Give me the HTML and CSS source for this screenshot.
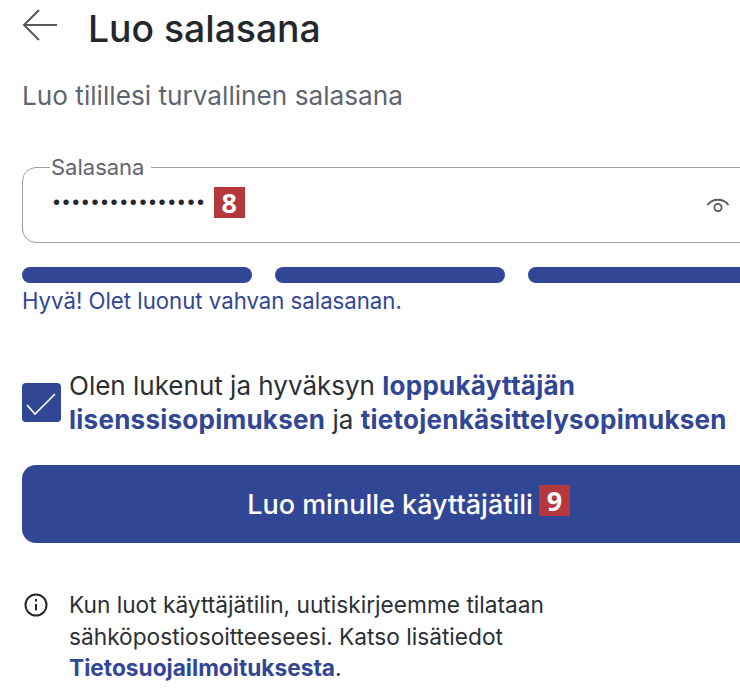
FILE: index.html
```html
<!DOCTYPE html>
<html lang="fi">
<head>
    <meta charset="UTF-8">
    <title>Luo salasana</title>
    <link rel="stylesheet" href="styles.css">
</head>
<body>
    <div class="page">
        <header class="header">
            <svg class="back-icon" width="36" height="34" viewBox="0 0 36 34" fill="none" stroke="#55585f" stroke-width="2">
                <path d="M35 17H2"></path>
                <path d="M17 2L2 17l15 15"></path>
            </svg>
            <h1 class="title">Luo salasana</h1>
        </header>

        <p class="intro">Luo tilillesi turvallinen salasana</p>

        <fieldset class="field">
            <legend class="field-label">Salasana</legend>
            <div class="field-row">
                <span class="dots">••••••••••••••••</span>
                <span class="badge">8</span>
                <svg class="eye-icon" width="26" height="18" viewBox="0 0 26 18" fill="none" stroke="#55585f" stroke-width="1.8">
                    <path d="M2.5 9C7.500 2 18.500 2 23.500 9"></path>
                    <circle cx="13" cy="11.500" r="3.600"></circle>
                </svg>
            </div>
        </fieldset>

        <div class="strength">
            <span class="strength-bar"></span>
            <span class="strength-bar"></span>
            <span class="strength-bar"></span>
        </div>
        <p class="strength-text">Hyvä! Olet luonut vahvan salasanan.</p>

        <div class="terms">
            <span class="checkbox">
                <svg width="39" height="39" viewBox="0 0 39 39" fill="none" stroke="#fff" stroke-width="1.6">
                    <path d="M5 22l8 9L33 11"></path>
                </svg>
            </span>
            <p class="terms-text">Olen lukenut ja hyväksyn <a class="link link-wide" href="#">loppukäyttäjän lisenssisopimuksen</a> ja <a class="link link-wide" href="#">tietojenkäsittelysopimuksen</a></p>
        </div>

        <button class="btn">
            <span class="btn-label">Luo minulle käyttäjätili<span class="badge badge-over">9</span></span>
        </button>

        <div class="notice">
            <svg class="info-icon" width="24" height="24" viewBox="0 0 24 24" fill="none" stroke="#26282c" stroke-width="2">
                <circle cx="12" cy="12" r="10.500"></circle>
                <path d="M12 11v6.500"></path>
                <path d="M12 6v2.500"></path>
            </svg>
            <p class="notice-text">Kun luot käyttäjätilin, uutiskirjeemme tilataan sähköpostiosoitteeseesi. Katso lisätiedot <a class="link" href="#">Tietosuojailmoituksesta</a>.</p>
        </div>
    </div>
</body>
</html>
```

FILE: styles.css
```css
:root {
    --primary: #324696;
    --text: #2b2f36;
    --text-light: #5f6570;
    --border: #9a9ca3;
    --badge: #b5383c;
}

* {
    box-sizing: border-box;
    margin: 0;
    padding: 0;
}

html,
body {
    overflow: hidden;
}

body {
    font-family: 'Inter', sans-serif;
    background: #fff;
    color: var(--text);
    height: 698px;
}

.page {
    width: 780px;
    padding: 0 22px;
}

.header {
    display: flex;
    align-items: center;
    height: 56px;
    padding-top: 1px;
}

.back-icon {
    margin-right: 30px;
    margin-top: -7px;
}

.title {
    font-size: 37.300px;
    font-weight: 500;
    color: #23272e;
    white-space: nowrap;
}

.intro {
    margin-top: 26px;
    font-size: 26.200px;
    line-height: 28px;
    color: var(--text-light);
}

.field {
    height: 88px;
    margin-top: 45px;
    padding: 0 17px 0 27px;
    border: 1.500px solid var(--border);
    border-radius: 14px;
}

.field-label {
    padding: 0 7px 0 1px;
    font-size: 22px;
    line-height: 24px;
    color: var(--text-light);
}

.field-row {
    display: flex;
    align-items: center;
    height: 31px;
    margin-top: 8px;
}

.dots {
    margin-left: 3px;
    font-family: 'Liberation Sans', sans-serif;
    font-size: 20px;
    letter-spacing: 2.600px;
    color: #23272e;
}

.badge {
    display: inline-flex;
    align-items: center;
    justify-content: center;
    width: 31px;
    height: 31px;
    margin-left: 7px;
    background: var(--badge);
    color: #fff;
    font-family: 'Open Sans', sans-serif;
    font-size: 27px;
    font-weight: 700;
}

.eye-icon {
    margin-left: auto;
    margin-top: 4px;
    margin-right: 9px;
}

.strength {
    display: flex;
    gap: 23px;
    margin-top: 24px;
}

.strength-bar {
    flex: 1;
    height: 16px;
    background: var(--primary);
    border-radius: 8px;
}

.strength-text {
    margin-top: 5px;
    font-size: 22.200px;
    line-height: 26px;
    color: var(--primary);
}

.terms {
    display: flex;
    align-items: center;
    gap: 8px;
    margin-top: 55px;
}

.checkbox {
    display: block;
    flex: none;
    width: 39px;
    height: 39px;
    margin-bottom: 2px;
    background: var(--primary);
    border-radius: 4px;
}

.terms-text {
    width: 680px;
    font-size: 26px;
    line-height: 34px;
    color: var(--text);
}

.link {
    color: var(--primary);
    font-weight: 700;
    text-decoration: none;
}

.link-wide {
    letter-spacing: 0.250px;
}

.btn {
    display: block;
    width: 100%;
    height: 78px;
    margin-top: 28px;
    background: var(--primary);
    border: none;
    border-radius: 14px;
    color: #fff;
    font-family: inherit;
    font-size: 27px;
    font-weight: 500;
}

.btn-label {
    position: relative;
}

.badge-over {
    position: absolute;
    top: -3px;
    left: 100%;
    margin-left: 6px;
}

.notice {
    display: flex;
    gap: 21px;
    margin-top: 46px;
    padding-left: 2px;
}

.info-icon {
    flex: none;
    margin-top: 4px;
}

.notice-text {
    width: 500px;
    font-size: 22.700px;
    line-height: 31.500px;
    color: var(--text);
}
```
